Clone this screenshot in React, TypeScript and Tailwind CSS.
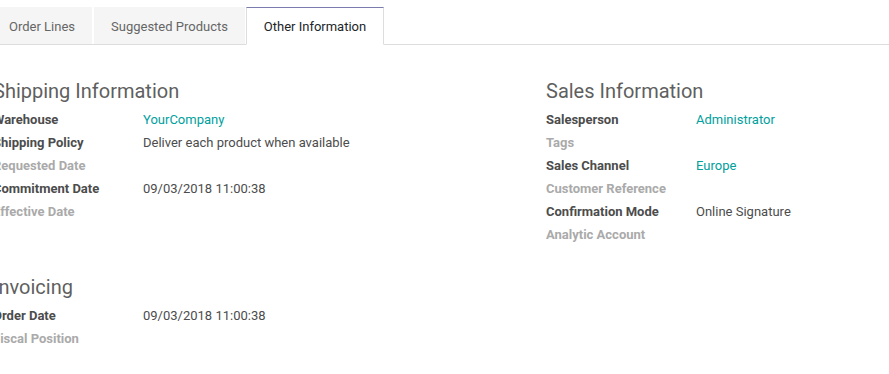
type Field = { label: string; value?: string; link?: boolean };

const shipping: Field[] = [
  { label: "Warehouse", value: "YourCompany", link: true },
  { label: "Shipping Policy", value: "Deliver each product when available" },
  { label: "Requested Date" },
  { label: "Commitment Date", value: "09/03/2018 11:00:38" },
  { label: "Effective Date" },
];

const invoicing: Field[] = [
  { label: "Order Date", value: "09/03/2018 11:00:38" },
  { label: "Fiscal Position" },
];

const sales: Field[] = [
  { label: "Salesperson", value: "Administrator", link: true },
  { label: "Tags" },
  { label: "Sales Channel", value: "Europe", link: true },
  { label: "Customer Reference" },
  { label: "Confirmation Mode", value: "Online Signature" },
  { label: "Analytic Account" },
];

const Group = ({ title, fields }: { title: string; fields: Field[] }) => (
  <div>
    <h2 className="text-[20px] leading-[24px] text-[#5f5f5f] mb-[5px]">{title}</h2>
    {fields.map((f) => (
      <div key={f.label} className="flex h-[23px] items-center text-[13px]">
        <div className={`w-[150px] shrink-0 font-bold ${f.value ? "text-[#4c4c4c]" : "text-[#aaaaaa]"}`}>
          {f.label}
        </div>
        {f.value && (
          <div className={f.link ? "text-[#00a09d]" : "text-[#4c4c4c]"}>{f.value}</div>
        )}
      </div>
    ))}
  </div>
);

export default function App() {
  return (
    <div className="w-[889px] h-[374px] bg-white overflow-hidden" style={{ fontFamily: "Roboto, 'Liberation Sans', sans-serif" }}>
      {/* Tabs */}
      <div className="flex pt-[7px] border-b border-[#dddddd] text-[13px]">
        <div className="w-[92px] h-[37px] flex items-center pl-[9px] pt-[2px] bg-[#f5f5f5] text-[#666666] mr-[2px]">
          Order Lines
        </div>
        <div className="w-[151px] h-[37px] flex items-center justify-center pt-[2px] bg-[#f5f5f5] text-[#666666] mr-[1px]">
          Suggested Products
        </div>
        <div className="w-[138px] h-[38px] -mb-px flex items-center justify-center pt-[2px] bg-white text-[#212529] border border-[#dddddd] border-t-[#7c7bad] border-b-white">
          Other Information
        </div>
      </div>

      {/* Content */}
      <div className="flex -ml-[7px] pt-[34px]">
        <div className="w-[553px]">
          <Group title="Shipping Information" fields={shipping} />
          <div className="mt-[52px]">
            <Group title="Invoicing" fields={invoicing} />
          </div>
        </div>
        <div>
          <Group title="Sales Information" fields={sales} />
        </div>
      </div>
    </div>
  );
}
